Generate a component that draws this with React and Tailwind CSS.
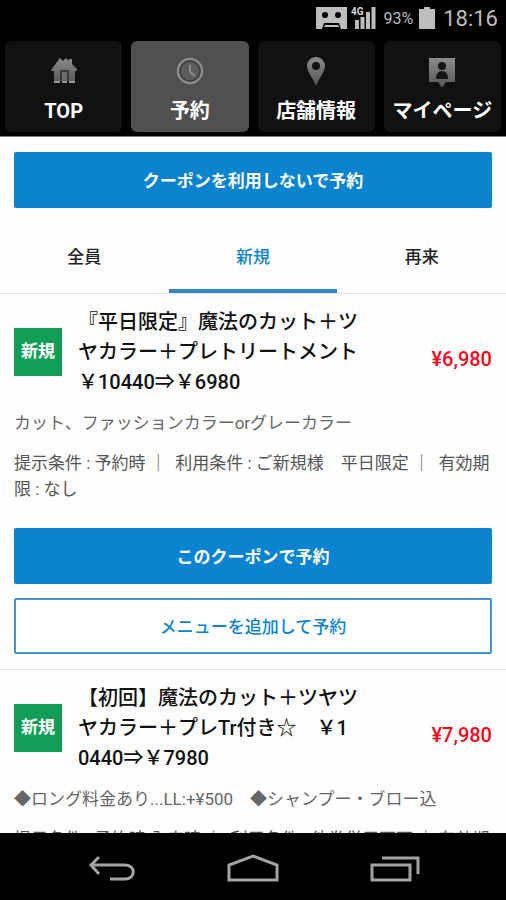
const navItems = [
  { label: 'TOP', icon: 'home' },
  { label: '予約', icon: 'clock', active: true },
  { label: '店舗情報', icon: 'pin' },
  { label: 'マイページ', icon: 'person' },
];

const tabs = [
  { label: '全員' },
  { label: '新規', active: true },
  { label: '再来' },
];

const coupons = [
  {
    title: '『平日限定』魔法のカット＋ツヤカラー＋プレトリートメント￥10440⇒￥6980',
    price: '¥6,980',
    detail: 'カット、ファッションカラーorグレーカラー',
    terms: '提示条件 : 予約時 ｜ \u00a0利用条件 : ご新規様　平日限定 ｜ \u00a0有効期限 : なし',
    bookable: true,
  },
  {
    title: '【初回】魔法のカット＋ツヤツヤカラー＋プレTr付き☆　￥10440⇒￥7980',
    price: '¥7,980',
    detail: '◆ロング料金あり...LL:+¥500　◆シャンプー・ブロー込',
    terms: '提示条件 : 予約時 入店時 ｜ \u00a0利用条件 : 他券併用不可 ｜ 有効期',
  },
];

function NavIcon({ name }) {
  const fill = `url(#fade-${name})`;
  return (
    <svg viewBox="0 0 32 32" className="h-8 w-8" aria-hidden="true">
      <defs>
        <linearGradient id={`fade-${name}`} x1="0" y1="0" x2="0" y2="1">
          <stop offset="0" stopColor="#8c8c8c" />
          <stop offset="1" stopColor="#555555" />
        </linearGradient>
      </defs>
      {name === 'home' && (
        <>
          <path fill={fill} d="M3 15 12 3l3 3 3-3 3 3V4h3v5l5 5v2h-2v12H6V16H3z" />
          <path fill="#3a3a3a" d="M12 15h9v2h-9zM12 17h2v8h-2zM19 17h2v8h-2z" />
          <path fill="#6d6d6d" d="M14 17h5v8h-5z" />
          <path fill="#9a9a9a" d="M6 26h21v2H6z" />
          <path fill="#101010" d="M12 26h2v2h-2zM19 26h2v2h-2z" />
        </>
      )}
      {name === 'clock' && (
        <>
          <circle cx="16" cy="16" r="12" fill="#5c5c5c" stroke="#8d8d8d" strokeWidth="2.500" />
          <circle cx="16" cy="16" r="10" fill="none" stroke="#3c3c3c" strokeWidth="1.500" />
          <path d="M16 10v7l5 4" fill="none" stroke="#8d8d8d" strokeWidth="2" />
        </>
      )}
      {name === 'pin' && (
        <path
          fill={fill}
          fillRule="evenodd"
          d="M16 2c5 0 9 4 9 9 0 6-6 12-9 20C13 23 7 17 7 11c0-5 4-9 9-9zm0 5a4 4 0 1 0 0 8 4 4 0 0 0 0-8z"
        />
      )}
      {name === 'person' && (
        <>
          <path fill={fill} d="M3 3h26v24h-9l-4 6-4-6H3z" />
          <circle cx="16" cy="11" r="4" fill="#151515" />
          <path fill="#151515" d="M10 24c0-5 2-8 6-8s6 3 6 8z" />
        </>
      )}
    </svg>
  );
}

function StatusBar() {
  return (
    <div className="flex h-9 shrink-0 items-center justify-end pr-2 text-[#bdbdbd]">
      <svg viewBox="0 0 31 22" className="h-[22px] w-[31px]" aria-hidden="true">
        <path
          fill="#bdbdbd"
          fillRule="evenodd"
          d="M0 0h31v22h-6l-2-6H8l-2 6H0zM9 5a3 3 0 1 0 0 6 3 3 0 0 0 0-6zm13 0a3 3 0 1 0 0 6 3 3 0 0 0 0-6z"
        />
        <path fill="#bdbdbd" d="M9 18h13l1 2H8z" />
      </svg>
      <svg viewBox="0 0 25 24" className="ml-1 h-6 w-[25px]" aria-hidden="true">
        <path fill="#bdbdbd" d="M4 14h4v9H4zM9.500 11h4v12h-4zM15 6h4v17h-4zM20.500 1h4v22h-4z" />
        <text
          x="0"
          y="9"
          fill="#d8d8d8"
          stroke="#000000"
          strokeWidth="1"
          paintOrder="stroke"
          className="font-['Roboto'] text-[10px] font-bold"
        >
          4G
        </text>
      </svg>
      <span className="ml-2 pt-0.5 text-base leading-9">93%</span>
      <svg viewBox="0 0 16 22" className="ml-1.5 h-[22px] w-4" aria-hidden="true">
        <path fill="#bdbdbd" d="M0 2h5V0h6v2h5v20H0z" />
      </svg>
      <span className="ml-2 pt-0.5 text-[22px] leading-9">18:16</span>
    </div>
  );
}

function Coupon({ title, price, detail, terms, bookable }) {
  return (
    <article className="border-t border-[#e2e2e2] px-3.5 pt-[13px] pb-[15px]">
      <div className="flex items-center">
        <span className="flex size-12 shrink-0 items-center justify-center bg-[#129d57] text-[17px] font-bold text-white">
          新規
        </span>
        <h2 className="ml-4 flex-1 text-xl leading-[30px] font-medium break-all text-[#111111]">{title}</h2>
        <p className="w-[134px] shrink-0 pt-3.5 text-right text-xl leading-6 font-medium text-[#f5091f]">{price}</p>
      </div>
      <p className="mt-[13px] text-[17px] leading-[26px] text-[#666666]">{detail}</p>
      <p className="mt-3.5 text-[17px] leading-[26px] text-[#555555]">{terms}</p>
      {bookable && (
        <>
          <button
            type="button"
            className="mt-[26px] h-14 w-full rounded-xs bg-[#0b84d0] pt-1 text-[17px] font-bold text-white"
          >
            このクーポンで予約
          </button>
          <button
            type="button"
            className="mt-3.5 h-14 w-full rounded-xs border-2 border-[#3c96d6] bg-white pt-1 text-[17px] font-medium text-[#0b84d0]"
          >
            メニューを追加して予約
          </button>
        </>
      )}
    </article>
  );
}

export default function App() {
  return (
    <div className="flex h-screen flex-col bg-black font-['Roboto','Noto_Sans_CJK_JP',sans-serif]">
      <StatusBar />
      <nav className="grid shrink-0 grid-cols-4 gap-[9px] border-b border-[#777777] px-[5px] pt-[5px] pb-1">
        {navItems.map(({ label, icon, active }) => (
          <a
            key={label}
            href="#"
            className={`flex h-[91px] flex-col items-center rounded-md pt-3.5 text-xl leading-7 font-bold whitespace-nowrap text-white ${
              active ? 'bg-[#505050]' : 'bg-[#111111]'
            }`}
          >
            <NavIcon name={icon} />
            <span className="mt-2.5">{label}</span>
          </a>
        ))}
      </nav>
      <main className="min-h-0 flex-1 overflow-y-auto bg-[#fefefe] [scrollbar-width:none]">
        <div className="px-3.5 pt-[15px]">
          <button
            type="button"
            className="h-14 w-full rounded-xs bg-[#0b84d0] pt-1 text-[17px] font-bold text-white"
          >
            クーポンを利用しないで予約
          </button>
        </div>
        <div role="tablist" className="mt-3.5 grid grid-cols-3">
          {tabs.map(({ label, active }) => (
            <button
              key={label}
              type="button"
              role="tab"
              aria-selected={Boolean(active)}
              className={`h-[71px] border-b-4 pt-1 text-[17px] font-medium ${
                active ? 'border-[#3385c6] text-[#0b84d0]' : 'border-transparent text-[#222222]'
              }`}
            >
              {label}
            </button>
          ))}
        </div>
        {coupons.map((coupon) => (
          <Coupon key={coupon.title} {...coupon} />
        ))}
      </main>
      <footer className="flex h-[67px] shrink-0 items-center justify-center gap-[90px] bg-black">
        <button type="button" aria-label="戻る">
          <svg viewBox="0 0 50 30" className="h-[30px] w-[50px]" fill="none" stroke="#a3a3a3" strokeWidth="3">
            <path d="M13 5 5 13l8 9M5 13h34c11 0 11 14 0 14H24" />
          </svg>
        </button>
        <button type="button" aria-label="ホーム">
          <svg viewBox="0 0 54 30" className="h-[30px] w-[54px]" fill="none" stroke="#a3a3a3" strokeWidth="3">
            <path d="M3 28V13L27 4l24 9v15z" />
          </svg>
        </button>
        <button type="button" aria-label="最近使ったアプリ">
          <svg viewBox="0 0 50 30" className="h-[30px] w-[50px]" fill="none" stroke="#a3a3a3" strokeWidth="3">
            <path d="M2 13h38v15H2zM12 6h36v16" />
          </svg>
        </button>
      </footer>
    </div>
  );
}
